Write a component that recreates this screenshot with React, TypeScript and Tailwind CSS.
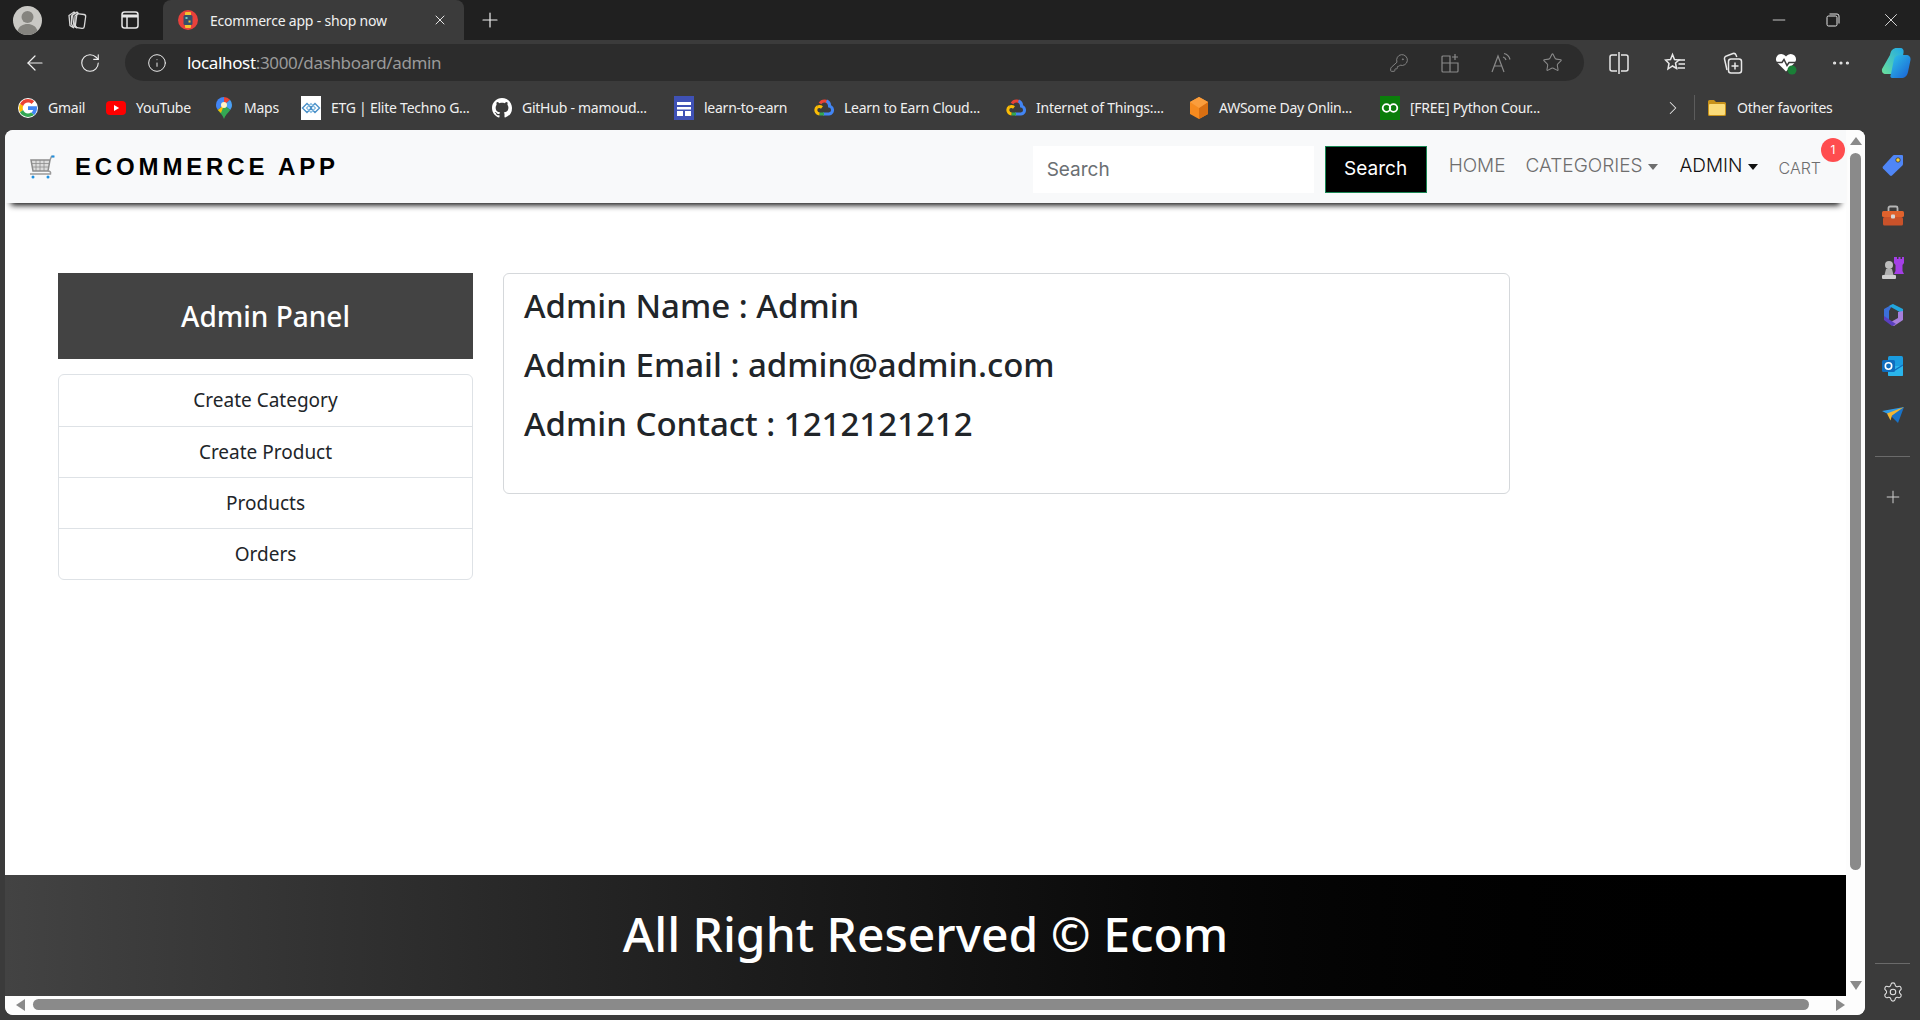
import React from 'react';
import {
  ArrowLeft,
  ChevronRight,
  Ellipsis,
  Info,
  KeyRound,
  Minus,
  Plus,
  RotateCw,
  Settings,
  Star,
  X,
} from 'lucide-react';

const Workspaces = () => (
  <svg width="22" height="22" viewBox="0 0 22 22" fill="none" stroke="#d8d8d8" strokeWidth="1.3">
    <path d="M3 6.5 8 3l1 1-3.5 3v8L8 19 4 16.5Z" />
    <path d="M6.5 6 11 3l1 1-3 3v9l2 3-3-2Z" />
    <rect x="10" y="5" width="9" height="14" rx="2" transform="rotate(8 14 12)" />
  </svg>
);

const TabsIcon = () => (
  <svg width="20" height="20" viewBox="0 0 20 20" fill="none" stroke="#e6e6e6" strokeWidth="1.5">
    <rect x="2" y="2" width="16" height="16" rx="2.5" />
    <path d="M2 6h16" strokeWidth="3" />
    <path d="M7 6v12" />
  </svg>
);

const Avatar = () => (
  <svg width="29" height="29" viewBox="0 0 29 29">
    <circle cx="14.5" cy="14.5" r="14.5" fill="#c9c8c4" />
    <circle cx="14.5" cy="11" r="6" fill="#85847f" />
    <path d="M4.5 25c1.500-5 5.500-7 10-7s8.500 2 10 7a14.500 14.500 0 0 1-20 0Z" fill="#85847f" />
  </svg>
);

const TabFavicon = () => (
  <svg width="20" height="20" viewBox="0 0 20 20">
    <circle cx="10" cy="10" r="10" fill="#e8413c" />
    <rect x="7" y="2" width="6" height="16" rx="1" fill="#f2c230" />
    <rect x="5.500" y="5" width="9" height="10" rx="1.500" fill="#35506b" />
    <rect x="7.500" y="7" width="2" height="2" fill="#6fd0c0" />
    <rect x="10.500" y="10.500" width="2" height="2" fill="#f2c230" />
  </svg>
);

const GoogleG = () => (
  <svg width="20" height="20" viewBox="0 0 48 48">
    <circle cx="24" cy="24" r="24" fill="#fff" />
    <path fill="#EA4335" d="M24 11c3.300 0 6.200 1.100 8.500 3.300l6.300-6.300C35 4.500 29.900 2.400 24 2.400 15.500 2.400 8.200 7.200 4.700 14.300l7.400 5.700C13.800 14.800 18.500 11 24 11Z" />
    <path fill="#4285F4" d="M45.600 24.500c0-1.600-.1-3.100-.4-4.500H24v8.500h12.100c-.5 2.800-2.100 5.100-4.500 6.700l7.200 5.600c4.200-3.900 6.800-9.600 6.800-16.300Z" />
    <path fill="#FBBC05" d="M12.100 28.600c-.4-1.400-.7-3-.7-4.600s.3-3.200.7-4.600l-7.400-5.700C3.200 16.800 2.400 20.300 2.400 24s.8 7.200 2.300 10.300l7.400-5.700Z" />
    <path fill="#34A853" d="M24 45.600c5.800 0 10.700-1.900 14.300-5.200l-7.200-5.600c-2 1.300-4.500 2.100-7.100 2.100-5.500 0-10.200-3.700-11.900-8.300l-7.400 5.700C8.200 40.800 15.500 45.600 24 45.600Z" />
  </svg>
);

const YouTubeIcon = () => (
  <svg width="20" height="20" viewBox="0 0 20 20">
    <rect y="3" width="20" height="14" rx="4" fill="#f00" />
    <path d="M8 7l5.200 3L8 13Z" fill="#fff" />
  </svg>
);

const MapsIcon = () => (
  <svg width="20" height="24" viewBox="0 0 20 24">
    <path d="M10 1a8 8 0 0 0-8 8c0 2 .7 3.500 1.800 5L10 9Z" fill="#4285F4" />
    <path d="M10 1a8 8 0 0 1 6 2.800L10 9Z" fill="#ea4335" />
    <path d="M16 3.800A8 8 0 0 1 18 9c0 2-.8 3.500-1.800 5L10 9Z" fill="#4aa0f5" />
    <path d="M3.800 14 10 9l6.200 5C14 17 11 19.500 10 23c-1-3.500-4-6-6.200-9Z" fill="#34a853" />
    <path d="M3.800 14 10 9 7 17Z" fill="#fbbc04" />
    <circle cx="10" cy="9" r="3" fill="#fff2c8" />
  </svg>
);

const EtgIcon = () => (
  <svg width="20" height="24" viewBox="0 0 20 24">
    <rect width="20" height="24" fill="#fff" />
    <path d="M1.500 12 6 7.500 10.500 12 6 16.500ZM9.500 12 14 7.500 18.500 12 14 16.500Z" fill="none" stroke="#4a90c8" strokeWidth="1.400" />
    <path d="M5.500 12 10 7.500 14.500 12 10 16.500Z" fill="none" stroke="#7fb8e0" strokeWidth="1.200" />
  </svg>
);

const GithubIcon = () => (
  <svg width="20" height="20" viewBox="0 0 16 16" fill="#fff">
    <path d="M8 0C3.580 0 0 3.580 0 8c0 3.540 2.290 6.530 5.470 7.590.4.070.55-.17.55-.38 0-.19-.01-.82-.01-1.490-2.010.37-2.530-.49-2.690-.94-.09-.23-.48-.94-.82-1.130-.28-.15-.68-.52-.01-.53.630-.01 1.080.58 1.230.82.720 1.210 1.870.87 2.330.66.070-.52.280-.87.510-1.070-1.780-.2-3.640-.89-3.640-3.950 0-.87.310-1.590.82-2.150-.08-.2-.36-1.020.08-2.120 0 0 .67-.21 2.200.82.640-.18 1.320-.27 2-.27s1.360.09 2 .27c1.530-1.040 2.200-.82 2.200-.82.440 1.100.160 1.920.08 2.120.51.560.82 1.270.82 2.150 0 3.070-1.870 3.750-3.650 3.950.29.250.54.730.54 1.480 0 1.070-.01 1.930-.01 2.200 0 .21.150.46.550.38A8.010 8.010 0 0 0 16 8c0-4.420-3.580-8-8-8Z" />
  </svg>
);

const BoardIcon = () => (
  <svg width="20" height="24" viewBox="0 0 20 24">
    <rect width="20" height="24" fill="#3f51b5" />
    <rect x="3" y="6" width="14" height="3" fill="#fff" />
    <rect x="3" y="11" width="14" height="2.500" fill="#fff" />
    <rect x="3" y="15" width="6" height="5" fill="#fff" />
    <rect x="11" y="15" width="6" height="5" fill="#fff" />
  </svg>
);

const GoogleCloud = () => (
  <svg width="20" height="17" viewBox="0 0 20 17" fill="none" strokeWidth="3">
    <path d="M6 4.500A5 5 0 0 1 15 5" stroke="#ea4335" />
    <path d="M12.500 1.800A5 5 0 0 1 15.500 7" stroke="#4285f4" />
    <path d="M14 7a4 4 0 0 1 1 8H9" stroke="#4285f4" />
    <path d="M10 15H5.500" stroke="#34a853" />
    <path d="M5.500 15a4 4 0 0 1-2-7.200" stroke="#fbbc05" />
    <path d="M3.500 8A4 4 0 0 1 8 8.500" stroke="#fbbc05" />
  </svg>
);

const AwsBox = () => (
  <svg width="20" height="24" viewBox="0 0 20 24">
    <path d="M10 1 19 6v12l-9 5-9-5V6Z" fill="#f58a1f" />
    <path d="M10 12 19 6v12l-9 5Z" fill="#d86f12" />
    <path d="M1 6l9-5 9 5-9 6Z" fill="#fa9d3c" />
  </svg>
);

const InfinityIcon = () => (
  <svg width="20" height="24" viewBox="0 0 20 24">
    <rect width="20" height="24" fill="#0a7d0a" />
    <circle cx="6.500" cy="12" r="3.800" fill="none" stroke="#fff" strokeWidth="1.800" />
    <circle cx="13.500" cy="12" r="3.800" fill="none" stroke="#fff" strokeWidth="1.800" />
  </svg>
);

const FolderIcon = () => (
  <svg width="20" height="20" viewBox="0 0 20 20">
    <path d="M1 3.500A1.500 1.500 0 0 1 2.500 2H7l2 2h8.500A1.500 1.500 0 0 1 19 5.500v11a1.500 1.500 0 0 1-1.500 1.500h-15A1.500 1.500 0 0 1 1 16.500Z" fill="#c8921a" />
    <rect x="2" y="6" width="16" height="11" rx="1" fill="#fbdc7a" />
  </svg>
);

const SplitIcon = () => (
  <svg width="22" height="24" viewBox="0 0 22 24" fill="none" stroke="#e8e8e8" strokeWidth="1.500">
    <path d="M11 1v22" />
    <path d="M9 4H4a2 2 0 0 0-2 2v12a2 2 0 0 0 2 2h5" />
    <path d="M13 4h5a2 2 0 0 1 2 2v12a2 2 0 0 1-2 2h-5" />
  </svg>
);

const FavList = () => (
  <svg width="22" height="22" viewBox="0 0 22 22" fill="none" stroke="#e8e8e8" strokeWidth="1.500">
    <path d="M8.500 2.500 10.500 7.500 15 8 11.500 11 12.500 16.500 8.500 14 4 17 5 11.500 1.500 8 6.500 7.500Z" />
    <path d="M14 8h7M14.500 12H21M13.500 16H21" />
  </svg>
);

const CollectionsIcon = () => (
  <svg width="22" height="24" viewBox="0 0 22 24" fill="none" stroke="#e8e8e8" strokeWidth="1.500">
    <path d="M6 19 3.500 8A2.500 2.500 0 0 1 5.500 5L12 2.500A2.500 2.500 0 0 1 15 4l.8 2" />
    <rect x="7.500" y="8" width="13" height="14" rx="2.500" />
    <path d="M14 11.500v7M10.500 15h7" />
  </svg>
);

const HealthIcon = () => (
  <svg width="24" height="24" viewBox="0 0 24 24">
    <path d="M12 20.500 3.500 12A5.300 5.300 0 0 1 11 4.500l1 1 1-1A5.300 5.300 0 0 1 20.500 12Z" fill="#fff" />
    <path d="M2 11.500h6l2-3 3 6 2-3h7" fill="none" stroke="#3b3b3b" strokeWidth="1.500" />
    <circle cx="18" cy="19" r="4.500" fill="#1a7f37" />
  </svg>
);

const CopilotIcon = () => (
  <svg width="30" height="32" viewBox="0 0 30 32">
    <defs>
      <linearGradient id="cpA" x1="0" y1="0" x2="1" y2="1">
        <stop offset="0" stopColor="#2ec4e8" />
        <stop offset="1" stopColor="#1a5fd6" />
      </linearGradient>
      <linearGradient id="cpB" x1="0" y1="1" x2="1" y2="0">
        <stop offset="0" stopColor="#6be09a" />
        <stop offset="1" stopColor="#1fa8e8" />
      </linearGradient>
    </defs>
    <path d="M9 8C10 3 12 1 16 1h3c3 0 4 2 3.500 5l-3 14c-1 5-3 7-7 7H5c-3 0-4.500-2-4-5Z" fill="url(#cpB)" />
    <path d="M13 12c1-3 3-4 6-4h6c3 0 5 2 4.500 5L27 25c-1 4-3 6-7 6H12c-3 0-3-2-2-4l3-15Z" fill="url(#cpA)" />
  </svg>
);

const CartLogo = () => (
  <svg width="26" height="26" viewBox="0 0 26 26" fill="none">
    <path d="M2 6h19l-2 11H4Z" fill="#dcdcdc" stroke="#8d8d8d" strokeWidth="1.500" />
    <path d="M2.500 9.500h18M3 13h17M7 6v11M11 6v11M15 6v11" stroke="#8d8d8d" strokeWidth=".8" />
    <path d="M21 6l1.500-3.500H25M19 17c2 0 3 1 2.500 3H1" stroke="#9a9a9a" strokeWidth="1.500" />
    <rect x="22.500" y="1.500" width="3" height="2" fill="#1e90e0" />
    <circle cx="4" cy="23" r="1.500" fill="#1e90e0" />
    <circle cx="19" cy="23" r="1.500" fill="#1e90e0" />
  </svg>
);

const TagIcon = () => (
  <svg width="24" height="24" viewBox="0 0 24 24">
    <path d="M13 2h8a1 1 0 0 1 1 1v8a2 2 0 0 1-.6 1.400L11 22.500a1.500 1.500 0 0 1-2 0l-7-7a1.500 1.500 0 0 1 0-2L12 2.500Z" fill="#4f86f7" />
    <circle cx="17" cy="7" r="2.200" fill="#f6cf3a" stroke="#333" strokeWidth=".8" />
  </svg>
);

const ToolboxIcon = () => (
  <svg width="24" height="22" viewBox="0 0 24 22">
    <path d="M7.500 6V3a1.500 1.500 0 0 1 1.500-1.500h6A1.500 1.500 0 0 1 16.500 3v3" fill="none" stroke="#b5b5b5" strokeWidth="1.800" />
    <rect x="1" y="6" width="22" height="6" rx="1.500" fill="#e0622d" />
    <rect x="2" y="12" width="20" height="8.500" rx="1.500" fill="#c9522a" />
    <rect x="10" y="9.500" width="4" height="4" rx="1" fill="#d8d8d8" />
  </svg>
);

const ChessIcon = () => (
  <svg width="24" height="26" viewBox="0 0 24 26">
    <path d="M14 3h2v2h1.500V3h2v2H21V3h2v6l-1.500 2v6l1.500 3H13l1.500-3v-6L13 9V3Z" fill="#a43fe6" />
    <circle cx="8" cy="11" r="4" fill="#bdbdbd" />
    <path d="M5 15h6l1.500 6H3.500Z" fill="#b0b0b0" />
    <rect x="1" y="21" width="14" height="4" rx="1" fill="#cfcfcf" />
  </svg>
);

const M365Icon = () => (
  <svg width="22" height="24" viewBox="0 0 22 24">
    <path d="M11 1 2 6v8l5 3V8Z" fill="#3b6fd8" />
    <path d="M7 3 11 1l10 5v5l-5-3Z" fill="#22a6dd" />
    <path d="M21 8v9l-9 6-5-3 9-5V9Z" fill="#a77fdc" />
    <path d="M2 13v4l8 6 4-2Z" fill="#5a3fc0" />
  </svg>
);

const OutlookIcon = () => (
  <svg width="22" height="22" viewBox="0 0 22 22">
    <rect x="6" y="1" width="15" height="20" rx="1.500" fill="#1a9ce0" />
    <path d="M6 11h15v9a1 1 0 0 1-1 1H7a1 1 0 0 1-1-1Z" fill="#2ab5ec" />
    <path d="M21 10 13 15l-7-4" fill="none" stroke="#0f6cbd" strokeWidth="1.200" />
    <rect x="0" y="5" width="13" height="12" rx="1.500" fill="#0f6cbd" />
    <circle cx="6.500" cy="11" r="3.200" fill="none" stroke="#fff" strokeWidth="1.600" />
  </svg>
);

const SendIcon = () => (
  <svg width="24" height="18" viewBox="0 0 24 18">
    <path d="M1 5 23 1 9 9Z" fill="#2f9be8" />
    <path d="M23 1 17 17 9 9Z" fill="#1973c8" />
    <path d="M23 1 6 7.500l3.500 7 1.500-5Z" fill="#f2b632" />
  </svg>
);

const bookmarks: { name: string; icon: React.ReactNode; w: string }[] = [
  { name: 'Gmail', icon: <GoogleG />, w: 'w-[88px]' },
  { name: 'YouTube', icon: <YouTubeIcon />, w: 'w-[108px]' },
  { name: 'Maps', icon: <MapsIcon />, w: 'w-[87px]' },
  { name: 'ETG | Elite Techno G...', icon: <EtgIcon />, w: 'w-[191px]' },
  { name: 'GitHub - mamoud...', icon: <GithubIcon />, w: 'w-[182px]' },
  { name: 'learn-to-earn', icon: <BoardIcon />, w: 'w-[140px]' },
  { name: 'Learn to Earn Cloud...', icon: <GoogleCloud />, w: 'w-[192px]' },
  { name: 'Internet of Things:...', icon: <GoogleCloud />, w: 'w-[183px]' },
  { name: 'AWSome Day Onlin...', icon: <AwsBox />, w: 'w-[191px]' },
  { name: '[FREE] Python Cour...', icon: <InfinityIcon />, w: 'w-[270px]' },
];

const panelLinks = ['Create Category', 'Create Product', 'Products', 'Orders'];

const TopBars = () => (
  <div className="shrink-0 font-['Noto_Sans',sans-serif]">
    <div className="flex h-10 items-center bg-[#202020] text-white">
      <div className="ml-[13px] flex w-[29px] justify-center"><Avatar /></div>
      <div className="ml-[24px] flex w-[22px] justify-center"><Workspaces /></div>
      <div className="ml-[31px] flex w-[22px] justify-center"><TabsIcon /></div>
      <div className="ml-[22px] flex h-10 w-[301px] items-center rounded-t-lg bg-[#3b3b3b] pl-[15px]">
        <TabFavicon />
        <span className="ml-[12px] w-[222px] text-[14px] tracking-[-0.2px] text-[#f0f0f0]">Ecommerce app - shop now</span>
        <X size={16} color="#e6e6e6" strokeWidth={1.5} />
      </div>
      <Plus size={24} strokeWidth={1.2} color="#f0f0f0" className="ml-[14px]" />
      <div className="ml-auto flex items-center">
        <Minus size={20} strokeWidth={1} color="#e6e6e6" className="mr-[37px]" />
        <svg width="14" height="14" viewBox="0 0 14 14" fill="none" stroke="#e6e6e6" className="mr-[40px]">
          <rect x="1" y="3" width="10" height="10" rx="1.500" />
          <path d="M3.500 1H11a2 2 0 0 1 2 2v7.500" />
        </svg>
        <X size={22} strokeWidth={1} color="#e6e6e6" className="mr-[18px]" />
      </div>
    </div>

    <div className="flex h-[45px] items-center bg-[#3b3b3b]">
      <ArrowLeft size={24} strokeWidth={1.2} color="#f0f0f0" className="ml-[23px]" />
      <RotateCw size={22} strokeWidth={1.2} color="#f0f0f0" className="ml-[32px]" />
      <div className="ml-[24px] flex h-[37px] w-[1459px] items-center rounded-full bg-[#2c2c2c]">
        <Info size={20} strokeWidth={1.2} color="#e8e8e8" className="ml-[22px]" />
        <div className="ml-[20px] text-[17px] tracking-[-0.35px]">
          <span className="text-white">localhost</span>
          <span className="text-[#9a9a9a]">:3000/dashboard/admin</span>
        </div>
        <div className="ml-auto flex items-center gap-[31px] pr-[21px]">
          <KeyRound size={20} strokeWidth={1.1} color="#8a8a8a" />
          <svg width="20" height="20" viewBox="0 0 20 20" fill="none" stroke="#8a8a8a" strokeWidth="1.200">
            <path d="M10 3H3a1 1 0 0 0-1 1v14a1 1 0 0 0 1 1h14a1 1 0 0 0 1-1v-8H10V3ZM10 10H2M10 10v9" />
            <path d="M15 1v6M12 4h6" />
          </svg>
          <svg width="20" height="22" viewBox="0 0 20 22" fill="none" stroke="#8a8a8a" strokeWidth="1.200">
            <path d="M1 20 7 4l6 16M3.500 14h7" />
            <path d="M12 5a4 4 0 0 1 3 3M13 1.500a8 8 0 0 1 6 6" />
          </svg>
          <Star size={21} strokeWidth={1.2} color="#8a8a8a" />
        </div>
      </div>
      <div className="ml-[24px] flex w-[22px] justify-center"><SplitIcon /></div>
      <div className="ml-[34px] flex w-[22px] justify-center"><FavList /></div>
      <div className="ml-[35px] flex w-[22px] justify-center"><CollectionsIcon /></div>
      <div className="ml-[31px] flex w-[24px] justify-center"><HealthIcon /></div>
      <Ellipsis size={22} strokeWidth={1.5} color="#e8e8e8" className="ml-[32px]" />
      <div className="ml-[29px]"><CopilotIcon /></div>
    </div>

    <div className="flex h-[45px] items-center bg-[#3b3b3b] pl-[18px] text-[14px] tracking-[-0.25px] text-[#f0f0f0]">
      {bookmarks.map((b) => (
        <div key={b.name} className={`flex shrink-0 items-center gap-[10px] ${b.w}`}>
          <span className="flex w-[20px] justify-center">{b.icon}</span>
          <span className="whitespace-nowrap">{b.name}</span>
        </div>
      ))}
      <ChevronRight size={22} strokeWidth={1.1} color="#e8e8e8" className="ml-[12px]" />
      <div className="ml-[10px] h-[25px] w-px bg-[#5c5c5c]" />
      <div className="ml-[12px]"><FolderIcon /></div>
      <span className="ml-[10px] whitespace-nowrap">Other favorites</span>
    </div>
  </div>
);

const Navbar = () => (
  <nav className="relative z-10 flex h-[73px] shrink-0 items-center rounded-tl-lg bg-[#f8f9fa] pl-[24px] shadow-[0_8px_6px_-6px_black]">
    <CartLogo />
    <span className="ml-[20px] font-['Liberation_Sans',sans-serif] text-[24px] font-bold tracking-[3.85px] text-black">ECOMMERCE APP</span>
    <div className="ml-auto flex items-center font-['Inter',sans-serif]">
      <input
        readOnly
        placeholder="Search"
        className="mt-[5px] h-[47px] w-[281px] bg-white pl-[14px] text-[19px] outline-none placeholder:text-[#6b6f73]"
      />
      <button className="ml-[11px] mt-[5px] h-[47px] w-[102px] border border-[#198754] bg-black text-[19px] text-white">Search</button>
      <span className="ml-[22px] text-[19px] font-light text-[#6e6e6e]">HOME</span>
      <span className="ml-[20px] text-[19px] font-light text-[#6e6e6e]">CATEGORIES</span>
      <span className="ml-[5px] h-0 w-0 border-x-[5px] border-t-[6px] border-x-transparent border-t-[#6e6e6e]" />
      <span className="ml-[22px] text-[19px] font-light text-[#111]">ADMIN</span>
      <span className="ml-[5px] h-0 w-0 border-x-[5px] border-t-[6px] border-x-transparent border-t-[#111]" />
      <span className="relative ml-[21px] mr-[25px] mt-[2px] text-[16px] font-light text-[#6e6e6e]">
        CART
        <span className="absolute -right-[24px] -top-[18px] flex h-6 w-6 items-center justify-center rounded-full bg-[#ff4d4f] text-[12px] font-normal text-white">1</span>
      </span>
    </div>
  </nav>
);

const AdminPage = () => (
  <main className="flex flex-1 items-start pl-[53px] pt-[70px] font-['Noto_Sans',sans-serif] text-[#212529]">
    <div className="w-[415px] shrink-0 text-center">
      <div className="flex h-[86px] items-center justify-center bg-[#434343] text-[28px] font-medium text-white">Admin Panel</div>
      <div className="mt-[15px] overflow-hidden rounded-md border border-[#dee2e6] bg-white">
        {panelLinks.map((link, i) => (
          <div key={link} className={`flex h-[51px] items-center justify-center text-[19px] ${i > 0 ? 'border-t border-[#dee2e6]' : ''}`}>
            {link}
          </div>
        ))}
      </div>
    </div>
    <div className="ml-[30px] h-[221px] w-[1007px] rounded-md border border-[#d5d8db] px-[20px] pt-[12px] text-[33px] font-medium leading-[40px]">
      <h3 className="mb-[19px]">Admin Name : Admin</h3>
      <h3 className="mb-[19px]">Admin Email : admin@admin.com</h3>
      <h3>Admin Contact : 1212121212</h3>
    </div>
  </main>
);

const Footer = () => (
  <footer className="flex h-[121px] shrink-0 items-center justify-center bg-gradient-to-r from-[#434343] to-black pb-[4px] font-['Noto_Sans',sans-serif] text-[48px] font-medium text-white">
    All Right Reserved © Ecom
  </footer>
);

const VerticalScroll = () => (
  <div className="flex w-[19px] shrink-0 flex-col items-center bg-[#fdfdfd]">
    <span className="mt-[7px] h-0 w-0 border-x-[6px] border-b-[8px] border-x-transparent border-b-[#8a8a8a]" />
    <div className="mt-[8px] h-[717px] w-[11px] rounded-full bg-[#8a8a8a]" />
    <span className="mt-[111px] h-0 w-0 border-x-[6px] border-t-[9px] border-x-transparent border-t-[#8a8a8a]" />
  </div>
);

const HorizontalScroll = () => (
  <div className="flex h-[19px] shrink-0 items-center rounded-b-lg bg-[#fdfdfd] pl-[11px]">
    <span className="h-0 w-0 -translate-y-px border-y-[6px] border-r-[9px] border-y-transparent border-r-[#8a8a8a]" />
    <div className="ml-[8px] h-[11px] w-[1776px] -translate-y-px rounded-full bg-[#8a8a8a]" />
    <span className="ml-[27px] h-0 w-0 -translate-y-px border-y-[6px] border-l-[9px] border-y-transparent border-l-[#8a8a8a]" />
  </div>
);

const SideRail = () => (
  <div className="flex w-[55px] shrink-0 flex-col items-center bg-[#3b3b3b] pt-[23px]">
    <div className="flex h-[24px] items-center"><TagIcon /></div>
    <div className="mt-[27px] flex h-[24px] items-center"><ToolboxIcon /></div>
    <div className="mt-[27px] flex h-[24px] items-center"><ChessIcon /></div>
    <div className="mt-[24px] flex h-[24px] items-center"><M365Icon /></div>
    <div className="mt-[27px] flex h-[24px] items-center"><OutlookIcon /></div>
    <div className="mt-[25px] flex h-[24px] items-center"><SendIcon /></div>
    <div className="mt-[29px] h-px w-[35px] bg-[#6a6a6a]" />
    <Plus size={20} strokeWidth={1.2} color="#cfcfcf" className="mt-[30px]" />
    <div className="mt-auto h-px w-[35px] bg-[#6a6a6a]" />
    <Settings size={22} strokeWidth={1.2} color="#e0e0e0" className="mb-[17px] mt-[17px]" />
  </div>
);

const App = () => {
  return (
    <div className="flex h-[1020px] w-[1920px] flex-col overflow-hidden bg-[#3b3b3b]">
      <TopBars />
      <div className="flex min-h-0 flex-1">
        <div className="flex min-w-0 flex-1 flex-col pb-[5px] pl-[5px]">
          <div className="flex min-h-0 flex-1 flex-col overflow-hidden rounded-lg bg-white">
            <div className="flex min-h-0 flex-1">
              <div className="flex min-w-0 flex-1 flex-col">
                <Navbar />
                <AdminPage />
                <Footer />
              </div>
              <VerticalScroll />
            </div>
            <HorizontalScroll />
          </div>
        </div>
        <SideRail />
      </div>
    </div>
  );
};

export default App;
